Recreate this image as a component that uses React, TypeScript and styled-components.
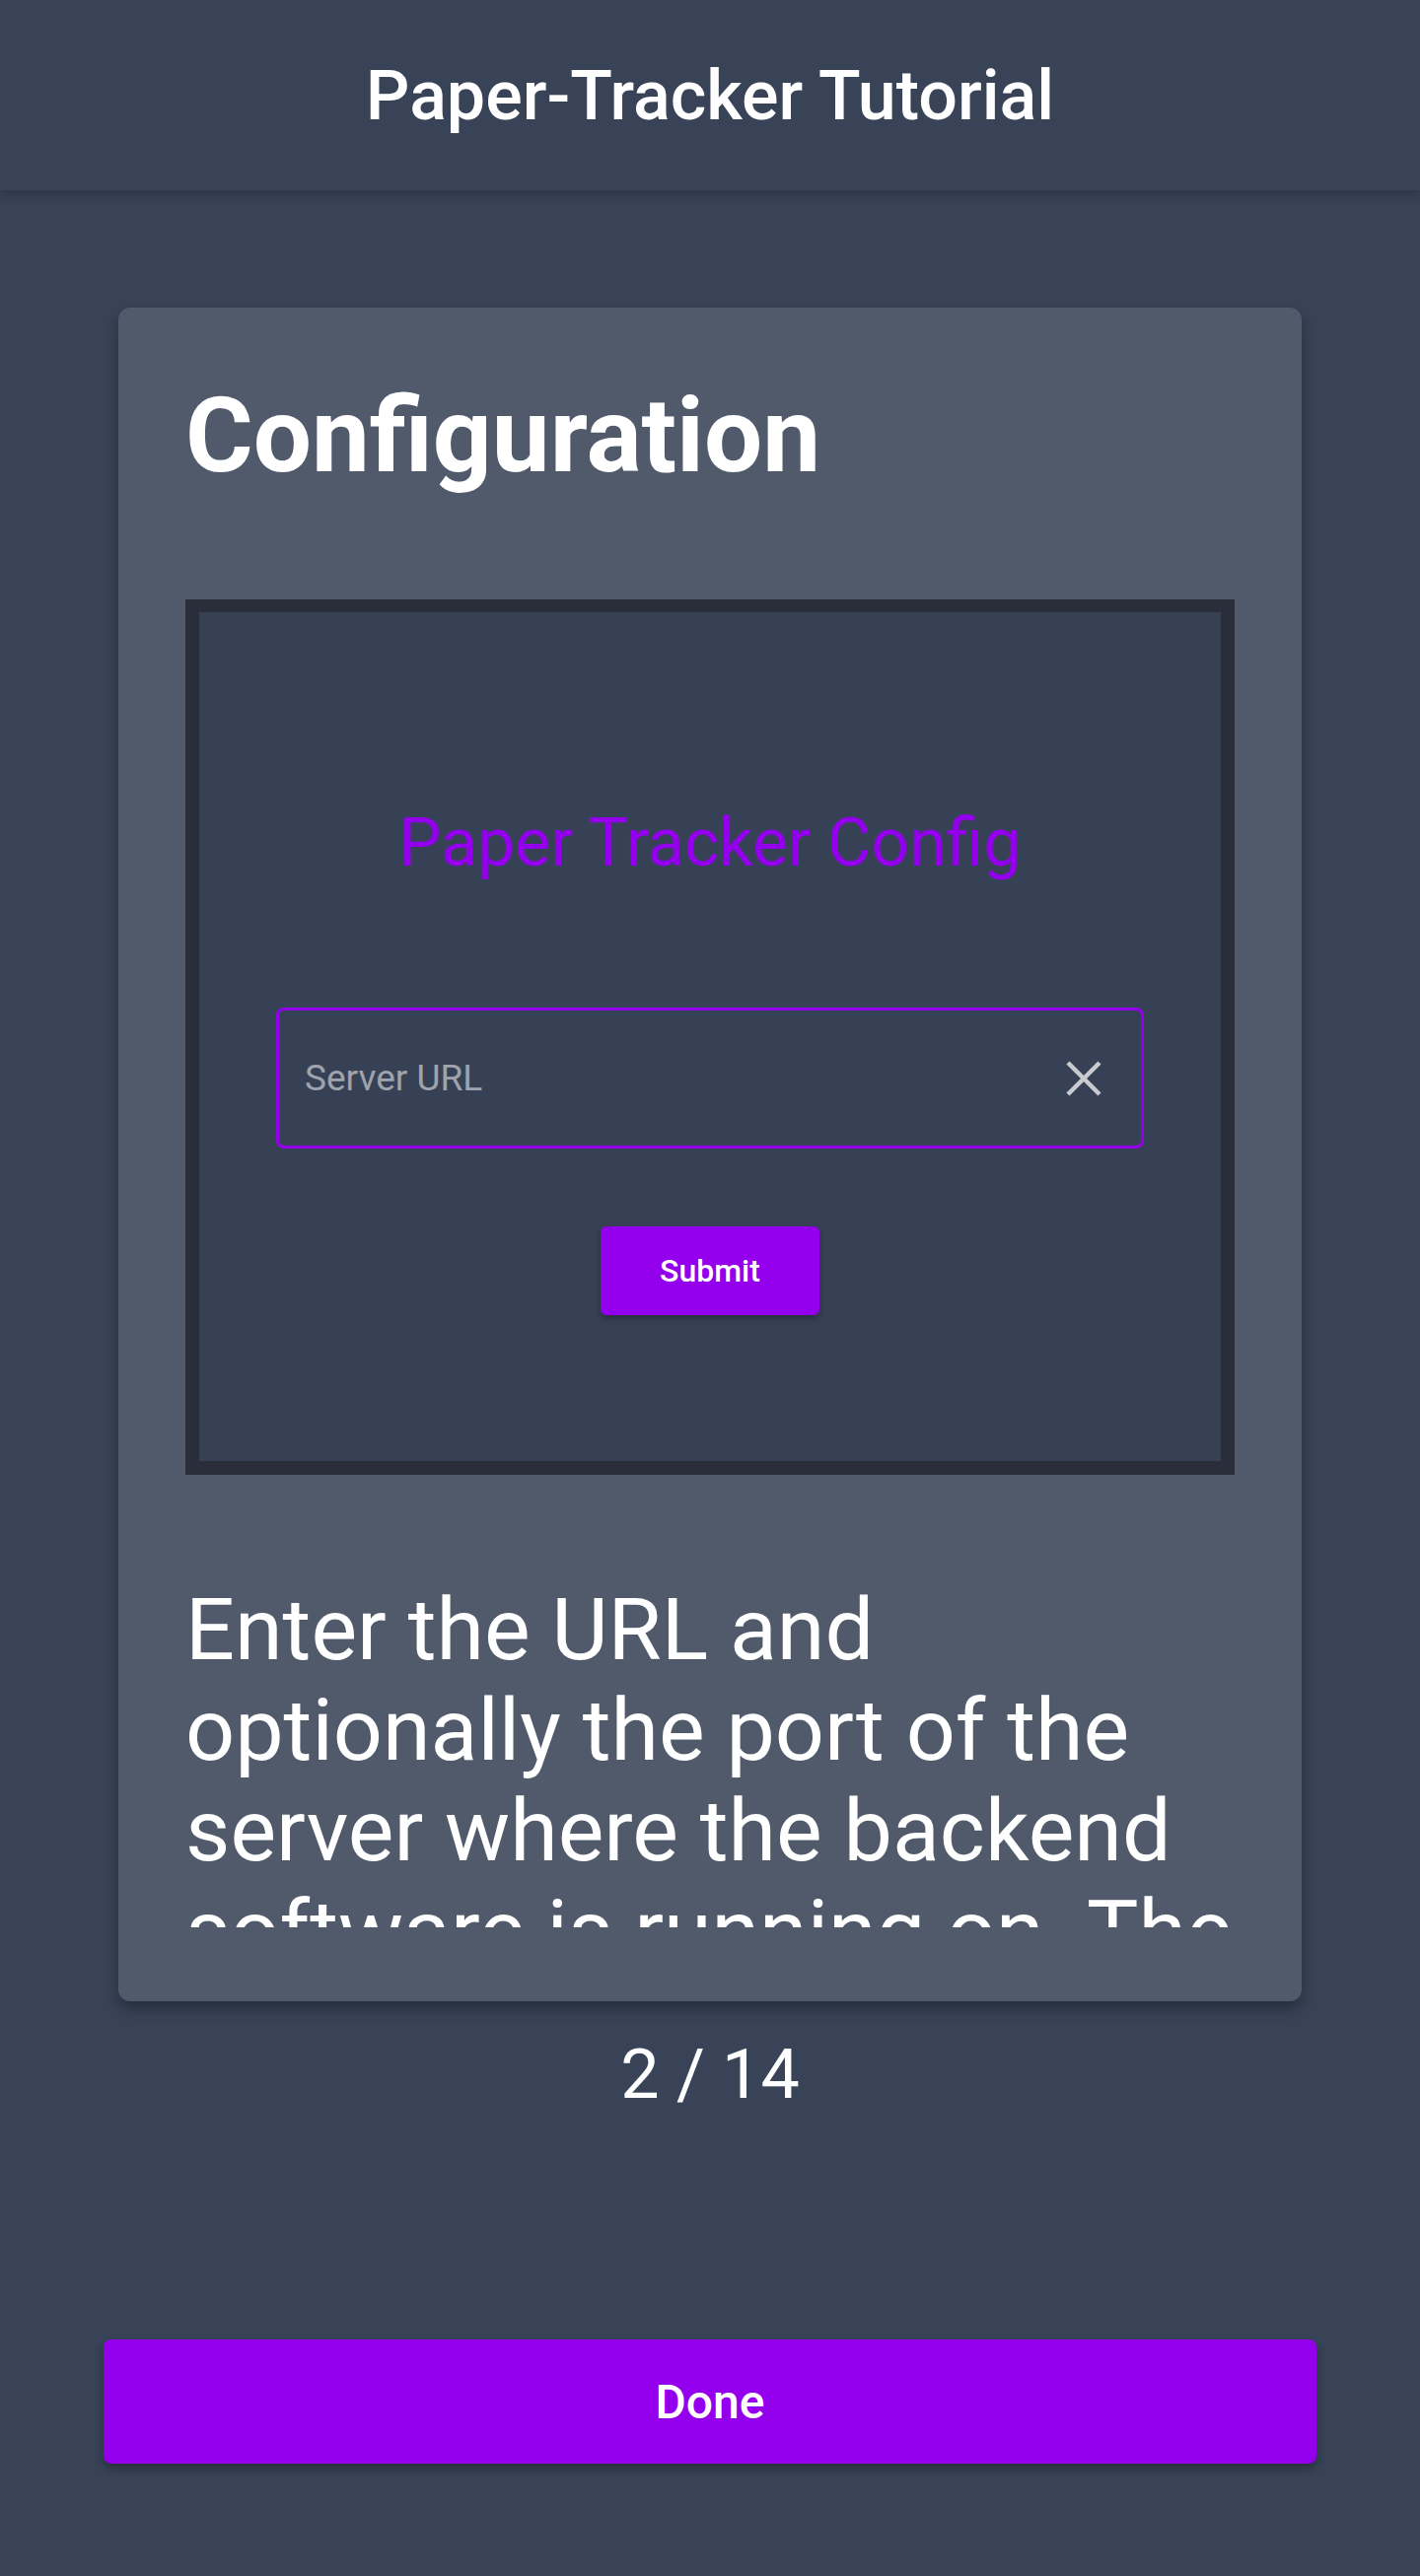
import React from 'react';
import styled, { createGlobalStyle } from 'styled-components';

const GlobalStyle = createGlobalStyle`
  html, body {
    margin: 0;
    padding: 0;
    background: #384357;
  }
  body {
    font-family: Roboto, "Noto Sans", "Liberation Sans", sans-serif;
    color: #ffffff;
  }
  * {
    box-sizing: border-box;
  }
`;

const Page = styled.div`
  min-height: 2613px;
  display: flex;
  flex-direction: column;
  align-items: center;
  background: #384357;
`;

const Header = styled.header`
  width: 100%;
  height: 193px;
  display: flex;
  align-items: center;
  justify-content: center;
  background: #384357;
  box-shadow: 0 4px 12px rgba(0, 0, 0, 0.22);
  position: relative;
  z-index: 1;
`;

const HeaderTitle = styled.h1`
  margin: 0;
  font-size: 70px;
  font-weight: 500;
  line-height: normal;
`;

const Card = styled.section`
  width: 1200px;
  height: 1718px;
  margin-top: 119px;
  padding: 69px 68px 72px;
  display: flex;
  flex-direction: column;
  background: #505a6b;
  border-radius: 12px;
  box-shadow: 0 8px 14px rgba(0, 0, 0, 0.3);
`;

const CardTitle = styled.h2`
  margin: 0;
  font-size: 105px;
  font-weight: 700;
  line-height: normal;
`;

const ScreenFrame = styled.div`
  margin-top: 104px;
  height: 888px;
  border: 14px solid #2a2e3a;
  border-top-width: 13px;
  background: #374155;
  display: flex;
  flex-direction: column;
  align-items: center;
`;

const ScreenTitle = styled.div`
  margin-top: 194px;
  font-size: 68px;
  font-weight: 400;
  line-height: normal;
  color: #9400ee;
`;

const UrlInput = styled.div`
  margin-top: 127px;
  width: 880px;
  height: 143px;
  border: 3px solid #9400ee;
  border-radius: 8px;
  padding: 0 40px 0 26px;
  display: flex;
  align-items: center;
  justify-content: space-between;
`;

const Placeholder = styled.span`
  font-size: 37px;
  color: #9ea3ad;
`;

const SubmitButton = styled.button`
  margin-top: 79px;
  width: 222px;
  height: 90px;
  border: none;
  border-radius: 6px;
  background: #9400ee;
  color: #ffffff;
  font-family: inherit;
  font-size: 32px;
  font-weight: 500;
  box-shadow: 0 3px 6px rgba(0, 0, 0, 0.3);
`;

const Description = styled.p`
  margin: 106px 0 0;
  height: 353px;
  overflow: hidden;
  font-size: 88px;
  line-height: 102px;
  font-weight: 400;
`;

const Counter = styled.div`
  margin-top: 33px;
  font-size: 70px;
  line-height: normal;
`;

const DoneButton = styled.button`
  margin-top: auto;
  margin-bottom: 114px;
  width: 1230px;
  height: 126px;
  border: none;
  border-radius: 8px;
  background: #9400ee;
  color: #ffffff;
  font-family: inherit;
  font-size: 48px;
  font-weight: 500;
  box-shadow: 0 5px 10px rgba(0, 0, 0, 0.3);
`;

const ClearIcon = () => (
  <svg width="36" height="36" viewBox="0 0 36 36">
    <path d="M2 2 L34 34 M34 2 L2 34" stroke="#c9cbd0" strokeWidth="4.5" strokeLinecap="butt" fill="none" />
  </svg>
);

export default function App() {
  return (
    <Page>
      <GlobalStyle />
      <Header>
        <HeaderTitle>Paper-Tracker Tutorial</HeaderTitle>
      </Header>
      <Card>
        <CardTitle>Configuration</CardTitle>
        <ScreenFrame>
          <ScreenTitle>Paper Tracker Config</ScreenTitle>
          <UrlInput>
            <Placeholder>Server URL</Placeholder>
            <ClearIcon />
          </UrlInput>
          <SubmitButton>Submit</SubmitButton>
        </ScreenFrame>
        <Description>
          Enter the URL and optionally the port of the server where the backend software is running on. The
          app will connect to it to load your papers.
        </Description>
      </Card>
      <Counter>2 / 14</Counter>
      <DoneButton>Done</DoneButton>
    </Page>
  );
}
